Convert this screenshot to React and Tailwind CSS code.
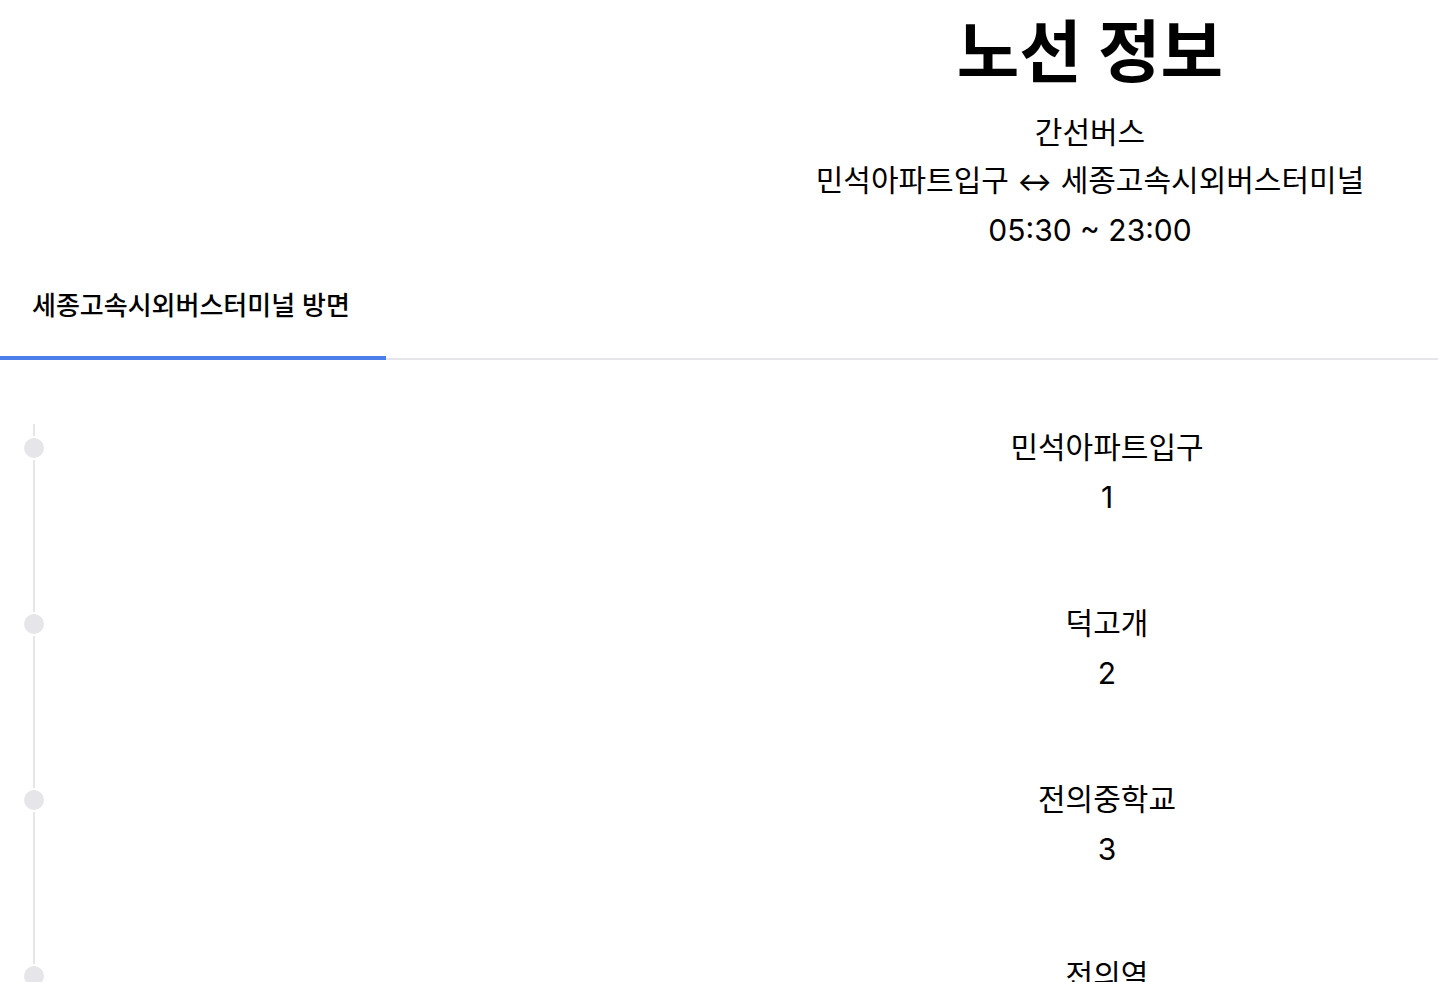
import React from 'react';

const stops = [
  { name: '민석아파트입구', seq: 1 },
  { name: '덕고개', seq: 2 },
  { name: '전의중학교', seq: 3 },
  { name: '전의역', seq: 4 },
  { name: '전의면사무소', seq: 5 },
];

function StopRow({ stop }) {
  return (
    <li className="flex h-[176px]">
      {/* timeline */}
      <div className="w-[68px] shrink-0 flex flex-col items-center">
        <div className="w-[2px] h-3 bg-[#e5e5ea]" />
        <div className="w-5 h-5 rounded-full bg-[#e5e5ea] my-[2px]" />
        <div className="w-[2px] flex-1 bg-[#e5e5ea]" />
      </div>
      <div className="flex-1 pl-[708px] -mt-[2px]">
        <div className="text-center text-[30px] leading-[50px] text-black">
          <p>{stop.name}</p>
          <p>{stop.seq}</p>
        </div>
      </div>
    </li>
  );
}

export default function App() {
  return (
    <div
      className="min-h-screen bg-white text-black"
      style={{ fontFamily: 'Inter, "Noto Sans CJK KR", "Noto Sans", sans-serif' }}
    >
      {/* header */}
      <header className="flex pt-[16px]">
        <div className="w-[742px] shrink-0" />
        <div className="flex-1 text-center">
          <h1 className="text-[68px] leading-[72px] font-bold mb-[20px]">노선 정보</h1>
          <p className="text-[30px] leading-[48px]">간선버스</p>
          <p className="text-[30px] leading-[48px]">
            민석아파트입구 <span className="text-[26px] font-medium">↔</span> 세종고속시외버스터미널
          </p>
          <p className="text-[30px] leading-[48px]">05:30 ~ 23:00</p>
        </div>
      </header>

      {/* tabs */}
      <nav className="flex border-b-2 border-[#e5e5ea]">
        <button className="w-[386px] h-[106px] -mb-[2px] flex items-center px-8 border-b-4 border-[#4b7ee8] text-[26px] font-medium text-black">
          세종고속시외버스터미널 방면
        </button>
      </nav>

      {/* stops */}
      <ul className="pt-[64px]">
        {stops.map((s) => (
          <StopRow key={s.seq} stop={s} />
        ))}
      </ul>
    </div>
  );
}
